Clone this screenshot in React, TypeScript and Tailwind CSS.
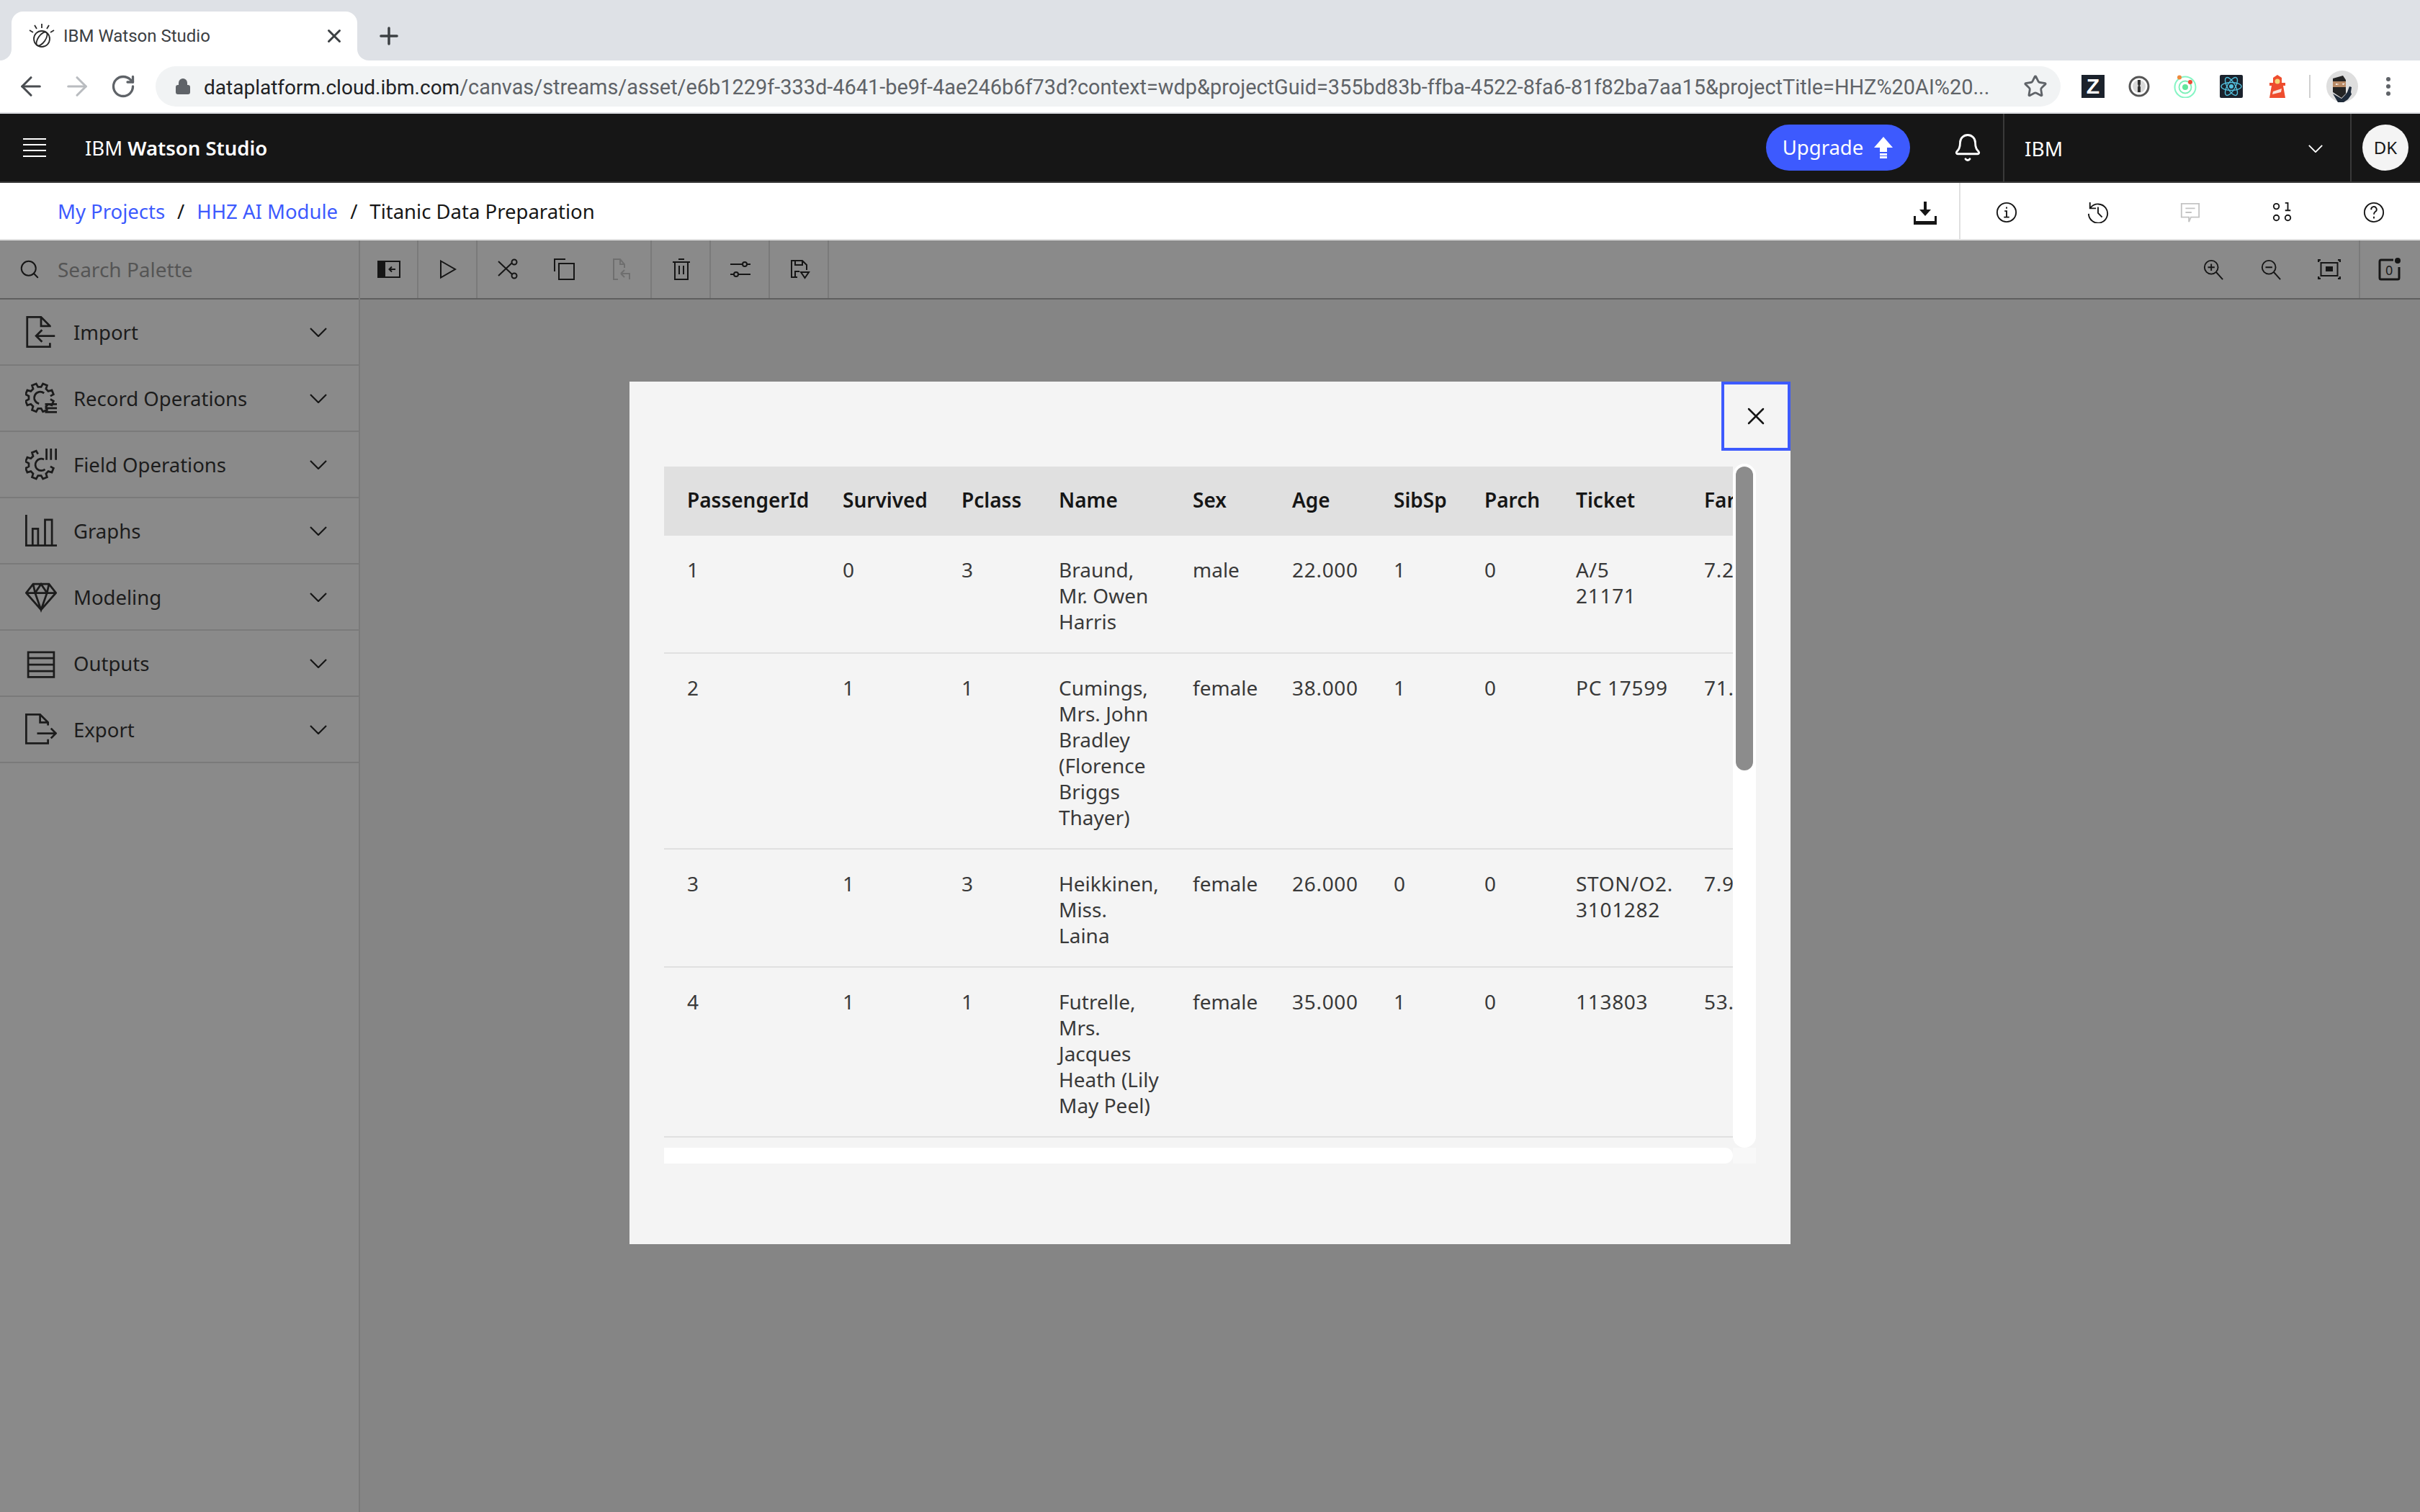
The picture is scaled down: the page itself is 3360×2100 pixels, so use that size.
import React from 'react';
import { Search, Star, Lock, ArrowLeft, ArrowRight, RotateCw, Plus, X, Bell } from 'lucide-react';

const plex = "font-['Noto_Sans',sans-serif]";

const rows = [
  ['1', '0', '3', 'Braund,\nMr. Owen\nHarris', 'male', '22.000', '1', '0', 'A/5\n21171', '7.25'],
  ['2', '1', '1', 'Cumings,\nMrs. John\nBradley\n(Florence\nBriggs\nThayer)', 'female', '38.000', '1', '0', 'PC 17599', '71.28'],
  ['3', '1', '3', 'Heikkinen,\nMiss.\nLaina', 'female', '26.000', '0', '0', 'STON/O2.\n3101282', '7.92'],
  ['4', '1', '1', 'Futrelle,\nMrs.\nJacques\nHeath (Lily\nMay Peel)', 'female', '35.000', '1', '0', '113803', '53.10'],
];
const headers = ['PassengerId', 'Survived', 'Pclass', 'Name', 'Sex', 'Age', 'SibSp', 'Parch', 'Ticket', 'Fare'];
const colWidths = [216, 165, 135, 186, 138, 141, 126, 127, 178, 178];

function Icon({ d, size = 44, className = '', sw = 2 }: { d: React.ReactNode; size?: number; className?: string; sw?: number }) {
  return (
    <svg width={size} height={size} viewBox="0 0 32 32" fill="none" stroke="currentColor" strokeWidth={sw} className={className}>
      {d}
    </svg>
  );
}

// outline of a gear, only the teeth between two angles
function gearPath(cx: number, cy: number, from: number, to: number) {
  const pt = (r: number, deg: number) => {
    const a = (deg * Math.PI) / 180;
    return `${(cx + r * Math.cos(a)).toFixed(1)} ${(cy + r * Math.sin(a)).toFixed(1)}`;
  };
  const out: string[] = [];
  for (let a = from; a <= to; a += 45) {
    out.push(pt(11, a - 14), pt(14.5, a - 9), pt(14.5, a + 9), pt(11, a + 14));
  }
  return 'M' + out.join('L');
}

const palette: { label: string; icon: React.ReactNode }[] = [
  {
    label: 'Import',
    icon: <Icon d={<path d="M25 27v4H2V1h14l9 9v1M16 1v9h9M30 20H11M17 14l-6 6 6 6" />} />,
  },
  {
    label: 'Record Operations',
    icon: (
      <Icon
        d={
          <>
            <path d={gearPath(14.5, 15.5, 22.5, 337.5)} />
            <path d="M19 11a6 6 0 1 0-5 10.5M20 22h12M20 26h12M20 30h12" />
          </>
        }
      />
    ),
  },
  {
    label: 'Field Operations',
    icon: (
      <Icon
        d={
          <>
            <path d={gearPath(14.5, 16.5, 22.5, 247.5)} />
            <path d="M20 21a6 6 0 1 1-1-10M21.5 0v11.5M26 0v11.5M31 0v11.5" />
          </>
        }
      />
    ),
  },
  { label: 'Graphs', icon: <Icon d={<path d="M1 0v31h31M7.5 31V14H13v17M20 31V5h7v26" />} /> },
  {
    label: 'Modeling',
    icon: <Icon d={<path d="M8 3h16l7 9-15 17L1 12zM1 12h30M10 12l6 17 6-17-6-9zM8 3l2 9M24 3l-2 9" />} />,
  },
  {
    label: 'Outputs',
    icon: <Icon d={<path d="M3 5h26v25H3zM3 11h26M3 17.5h26M3 24h26" />} />,
  },
  {
    label: 'Export',
    icon: <Icon d={<path d="M23 26v4H1V1h14l8 8v3M15 1v8h8M12 20h19M26 15l5 5-5 5" />} />,
  },
];

const toolbar: { w: number; items: React.ReactNode[] }[] = [
  {
    w: 81,
    items: [
      <svg key="a" width="32" height="24" viewBox="0 0 32 24" fill="none">
        <rect x="1" y="1" width="30" height="22" stroke="#161616" strokeWidth="2" />
        <rect x="0" y="0" width="11" height="24" fill="#161616" />
        <path d="M25 12h-8M20 8.5L16.5 12l3.5 3.5" stroke="#161616" strokeWidth="2" />
      </svg>,
    ],
  },
  { w: 82, items: [<Icon key="a" size={32} d={<path d="M6 4.5L26 16 6 27.5z" />} />] },
  {
    w: 242,
    items: [
      <Icon
        key="a"
        size={32}
        d={
          <>
            <path d="M3 5l19 18M3 25L22 7" />
            <circle cx="25" cy="6" r="3.5" />
            <circle cx="25" cy="25" r="3.5" />
          </>
        }
      />,
      <Icon key="b" size={32} d={<path d="M2 19V2h15M8 8h21v22H8z" />} />,
      <Icon key="c" size={32} className="text-[#6f6f6f]" d={<path d="M11 30H5V2h9l6 7v5M14 2v7h6M15 22l5-5M15 22l5 5M15 22h12v8" />} />,
    ],
  },
  { w: 82, items: [<Icon key="a" size={32} d={<path d="M4 6h24M12 2h8M7 6v24h18V6M13 11v12M19 11v12" />} />] },
  {
    w: 82,
    items: [
      <Icon
        key="a"
        size={32}
        d={
          <>
            <path d="M2 9h17M25 9h5M2 23h5M13 23h17" />
            <circle cx="22" cy="9" r="3" />
            <circle cx="10" cy="23" r="3" />
          </>
        }
      />,
    ],
  },
  { w: 82, items: [<Icon key="a" size={32} d={<path d="M13 27H5V4h15l6 6v7M10 4v6h10V4M10 27v-8h6M18 20h11l-5.5 8z" />} />] },
];

function Chevron({ className = '', w = 24, h = 13 }: { className?: string; w?: number; h?: number }) {
  return (
    <svg width={w} height={h} viewBox="0 0 24 13" fill="none" stroke="currentColor" strokeWidth="2.2" preserveAspectRatio="none" className={className}>
      <path d="M1 1l11 11L23 1" />
    </svg>
  );
}

function ExtensionIcons() {
  const cell = 'flex h-[44px] w-[64px] items-center justify-center';
  return (
    <div className="flex items-center">
      <div className={cell}>
        <div className="flex h-[32px] w-[32px] items-center justify-center bg-[#1b222c] font-['Liberation_Sans',sans-serif] text-[30px] font-bold leading-none text-white">Z</div>
      </div>
      <div className={cell}>
        <svg width="30" height="30" viewBox="0 0 30 30" fill="none">
          <circle cx="15" cy="15" r="13" fill="#fff" stroke="#555" strokeWidth="3" />
          <circle cx="15" cy="15" r="9" fill="#d9d9d9" />
          <path d="M13 6h4v6l-1 2 1 2v7h-4v-7l1-2-1-2z" fill="#333" />
        </svg>
      </div>
      <div className={cell}>
        <svg width="32" height="32" viewBox="0 0 32 32" fill="none">
          <circle cx="16" cy="17" r="14.5" stroke="#86f5c4" strokeWidth="2" />
          <circle cx="16" cy="17" r="8.5" stroke="#7cefb8" strokeWidth="1.8" />
          <circle cx="16" cy="17" r="4" fill="#62e69c" />
          <circle cx="8" cy="3.5" r="3" fill="#ef8a3c" />
          <circle cx="23" cy="10" r="3" fill="#ec4b35" />
        </svg>
      </div>
      <div className={cell}>
        <svg width="32" height="32" viewBox="0 0 32 32" fill="none">
          <rect width="32" height="32" rx="2" fill="#1b222c" />
          <circle cx="16" cy="16" r="3" fill="#53c1de" />
          <g stroke="#53c1de" strokeWidth="1.4">
            <ellipse cx="16" cy="16" rx="14" ry="5.5" />
            <ellipse cx="16" cy="16" rx="14" ry="5.5" transform="rotate(60 16 16)" />
            <ellipse cx="16" cy="16" rx="14" ry="5.5" transform="rotate(120 16 16)" />
          </g>
        </svg>
      </div>
      <div className={cell}>
        <svg width="22" height="32" viewBox="0 0 22 32">
          <path d="M11 0l6 4v7h5v4h-3l3 17H0l3-17H0v-4h5V4z" fill="#ee4d2e" />
          <circle cx="11" cy="9" r="3.5" fill="#f7d774" />
          <path d="M5 23l12-4-1 5-12 3z" fill="#fbe3da" />
        </svg>
      </div>
      <div className="ml-[12px] h-[32px] w-[2px] bg-[#d0d0d0]" />
      <div className="ml-[22px] flex h-[44px] w-[44px]">
        <svg width="44" height="44" viewBox="0 0 44 44">
          <circle cx="22" cy="22" r="22" fill="#dedede" />
          <path d="M9 11l14-4 4 6v19l-6 6-12-8z" fill="#242424" />
          <rect x="9" y="15" width="18" height="8" fill="#b88a66" />
          <path d="M13 18l5 1-5 1zM22 18l4 0-3 2z" fill="#fff" />
          <path d="M9 32l12 7 5-5 3-4 3-8 3 1-1 7 1 3-5 7-6 4h-8z" fill="#1f2b3a" />
        </svg>
      </div>
      <div className="ml-[39px] flex flex-col gap-[4px]">
        <div className="h-[6px] w-[6px] rounded-full bg-[#5f6368]" />
        <div className="h-[6px] w-[6px] rounded-full bg-[#5f6368]" />
        <div className="h-[6px] w-[6px] rounded-full bg-[#5f6368]" />
      </div>
    </div>
  );
}

export default function App() {
  return (
    <div className="relative flex h-[2100px] w-[3360px] flex-col overflow-hidden bg-[#858585]">
      {/* browser tabs */}
      <div className="flex h-[84px] shrink-0 items-end bg-[#dee1e6] pl-[16px] font-['Roboto',sans-serif]">
        <div className="relative flex h-[68px] w-[480px] items-center rounded-t-[16px] bg-white pl-[24px] pr-[17px]">
          <div className="absolute -left-[16px] bottom-0 h-[16px] w-[16px] bg-white">
            <div className="h-full w-full rounded-br-[16px] bg-[#dee1e6]" />
          </div>
          <div className="absolute -right-[16px] bottom-0 h-[16px] w-[16px] bg-white">
            <div className="h-full w-full rounded-bl-[16px] bg-[#dee1e6]" />
          </div>
          <svg width="36" height="36" viewBox="0 0 36 36" fill="none" stroke="#2b2b2b" strokeWidth="1.8">
            <circle cx="18" cy="22" r="11" />
            <ellipse cx="18" cy="22" rx="5" ry="11" transform="rotate(35 18 22)" />
            <path d="M18 1v6M8 3l3 5M28 3l-3 5M1 10l5 3M35 10l-5 3" />
          </svg>
          <span className="ml-[12px] flex-1 text-[24px] text-[#3c4043]">IBM Watson Studio</span>
          <X size={30} strokeWidth={2.4} className="text-[#3c4043]" />
        </div>
        <div className="flex h-[68px] w-[88px] items-center justify-center">
          <Plus size={38} strokeWidth={2.2} className="text-[#3c4043]" />
        </div>
      </div>

      {/* address bar */}
      <div className="flex h-[74px] shrink-0 items-center border-b-2 border-[#dadce0] bg-white font-['Roboto',sans-serif]">
        <div className="flex w-[216px] items-center gap-[22px] pl-[22px] text-[#5f6368]">
          <ArrowLeft size={42} strokeWidth={1.8} className="text-[#4a4d51]" />
          <ArrowRight size={42} strokeWidth={1.8} className="text-[#b9bcc0]" />
          <RotateCw size={36} strokeWidth={2.2} className="ml-[3px]" />
        </div>
        <div className="flex h-[56px] w-[2645px] items-center rounded-full bg-[#f1f3f4] pl-[26px] pr-[18px]">
          <Lock size={24} fill="#5f6368" className="text-[#5f6368]" />
          <span className="ml-[17px] flex-1 truncate pt-[3px] text-[28.9px] leading-[40px] text-[#5f6368]">
            <span className="text-[28px] text-[#202124]">dataplatform.cloud.ibm.com</span>
            /canvas/streams/asset/e6b1229f-333d-4641-be9f-4ae246b6f73d?context=wdp&projectGuid=355bd83b-ffba-4522-8fa6-81f82ba7aa15&projectTitle=HHZ%20AI%20...
          </span>
          <Star size={34} strokeWidth={2} className="ml-[24px] text-[#5f6368]" />
        </div>
        <div className="ml-[13px] flex items-center">
          <ExtensionIcons />
        </div>
      </div>

      {/* black header */}
      <div className={`flex h-[96px] shrink-0 items-center border-b-2 border-[#393939] bg-[#161616] text-white ${plex}`}>
        <div className="flex w-[118px] flex-col gap-[6px] pl-[32px]">
          <div className="h-[2px] w-[32px] bg-white" />
          <div className="h-[2px] w-[32px] bg-white" />
          <div className="h-[2px] w-[32px] bg-white" />
          <div className="h-[2px] w-[32px] bg-white" />
        </div>
        <span className="pt-[1px] text-[27.5px]">
          IBM <span className="font-semibold">Watson Studio</span>
        </span>
        <div className="ml-auto flex items-center">
          <div className="flex h-[64px] w-[200px] items-center justify-center gap-[14px] rounded-full bg-[#3d5afe] text-[27.5px]">
            Upgrade
            <svg width="28" height="30" viewBox="0 0 28 30" fill="white">
              <path d="M14 0l13 15h-8v6H9v-6H1zM9 23h10v3H9zM9 27h10v3H9z" />
            </svg>
          </div>
          <Bell size={42} strokeWidth={1.6} className="ml-[59px] mr-[28px]" />
          <div className="flex h-[94px] w-[484px] items-center justify-between border-x-2 border-[#393939] pl-[28px] pr-[38px]">
            <span className="pt-[2px] text-[28px]">IBM</span>
            <Chevron w={20} h={11} className="mt-[2px] text-white" />
          </div>
          <div className="flex w-[95px] pl-[15px]">
            <div className="flex h-[64px] w-[64px] items-center justify-center rounded-full bg-[#f4f4f4] text-[24px] text-[#161616]">DK</div>
          </div>
        </div>
      </div>

      {/* breadcrumb */}
      <div className={`flex h-[80px] shrink-0 items-center border-b-2 border-[#e0e0e0] bg-white text-[27.5px] ${plex}`}>
        <div className="flex items-center pl-[80px] pt-[2px]">
          <span className="text-[#3d5afe]">My Projects</span>
          <span className="mx-[17px] text-[#161616]">/</span>
          <span className="text-[#3d5afe]">HHZ AI Module</span>
          <span className="mx-[17px] text-[#161616]">/</span>
          <span className="text-[#161616]">Titanic Data Preparation</span>
        </div>
        <div className="ml-auto flex h-full items-center text-[#161616]">
          <svg width="32" height="32" viewBox="0 0 32 32" fill="#161616" className="mr-[31px] mt-[6px]">
            <path d="M14 0h4v11h6l-8 9-8-9h6zM0 20h3v7h26v-7h3v12H0z" />
          </svg>
          <div className="flex h-full w-[640px] items-center border-l-2 border-[#e0e0e0] pt-[3px]">
            <div className="flex w-[128px] justify-center">
              <Icon size={30} d={<><circle cx="16" cy="16" r="14" /><path d="M13 14h3v9M12 23h8M16 8v2.5" /></>} />
            </div>
            <div className="flex w-[128px] justify-center">
              <Icon size={30} d={<path d="M4 1v9h9M5 9a14 14 0 1 1-3 9M16 8v9l6 6" />} />
            </div>
            <div className="flex w-[128px] justify-center">
              <Icon size={30} className="text-[#c4c4c4]" d={<path d="M3 3h26v20H17l-3 7v-7H3zM9 10h14M9 16h9" />} />
            </div>
            <div className="flex w-[128px] justify-center">
              <Icon size={30} d={<><circle cx="7" cy="7" r="4" /><path d="M20 2h4v11M20 13h8" /><circle cx="7" cy="24" r="4" /><circle cx="24" cy="24" r="4" /></>} />
            </div>
            <div className="flex w-[128px] justify-center">
              <Icon size={30} d={<><circle cx="16" cy="16" r="14" /><path d="M12 12a4 4 0 1 1 6 3c-1.5 1-2 2-2 4M16 22v3" /></>} />
            </div>
          </div>
        </div>
      </div>

      {/* canvas */}
      <div className={`flex flex-1 bg-[#858585] ${plex}`}>
        <div className="w-[500px] shrink-0 border-r-2 border-[#7a7a7a] bg-[#8a8a8a]">
          <div className="flex h-[82px] items-center border-b-2 border-[#5f5f5f] pl-[26px] text-[28px] text-[#555]">
            <Search size={30} strokeWidth={1.6} className="text-[#161616]" />
            <span className="ml-[24px]">Search Palette</span>
          </div>
          {palette.map((p) => (
            <div key={p.label} className="flex h-[92px] items-center border-b-2 border-[#7a7a7a] text-[27.5px] text-[#1c1c1c]">
              <div className="flex w-[102px] pl-[35px]">{p.icon}</div>
              <span className="pt-[2px]">{p.label}</span>
              <Chevron className="ml-auto mr-[44px] text-[#161616]" />
            </div>
          ))}
        </div>
        <div className="flex-1">
          <div className="flex h-[82px] items-center border-b-2 border-[#5f5f5f] bg-[#8a8a8a] text-[#161616]">
            {toolbar.map((g, i) => (
              <div key={i} className={`flex h-full items-center border-r-2 border-[#7a7a7a] ${i === 0 ? '' : 'pl-[2px]'}`} style={{ width: g.w }}>
                {g.items.map((it, j) => (
                  <div key={j} className="flex flex-1 justify-center">{it}</div>
                ))}
              </div>
            ))}
            <div className="ml-auto flex h-full items-center">
              <div className="flex items-center pr-[25px]">
                <Icon size={30} d={<><circle cx="13" cy="13" r="10" /><path d="M20 20l10 11M13 8v10M8 13h10" /></>} />
                <Icon size={30} className="ml-[50px]" d={<><circle cx="13" cy="13" r="10" /><path d="M20 20l10 11M8 13h10" /></>} />
                <svg width="32" height="28" viewBox="0 0 32 28" fill="none" stroke="#161616" strokeWidth="2" className="ml-[50px]">
                  <path d="M1 4V1h3M28 1h3v3M31 24v3h-3M4 27H1v-3" strokeWidth="2.5" />
                  <path d="M4.5 5h23v18h-23z" />
                  <rect x="11" y="10" width="10" height="7" fill="#161616" stroke="none" />
                </svg>
              </div>
              <div className="flex h-full w-[85px] items-center justify-center border-l-2 border-[#7a7a7a]">
                <svg width="32" height="32" viewBox="0 0 32 32" fill="none" stroke="#161616" strokeWidth="3" className="-ml-[2px]">
                  <path d="M21 3H4a2 2 0 0 0-2 2v23a2 2 0 0 0 2 2h23a2 2 0 0 0 2-2V13" />
                  <text x="10" y="24" fontSize="18" fill="#1c1c1c" stroke="none">0</text>
                  <circle cx="27" cy="4" r="4" fill="#161616" stroke="none" />
                </svg>
              </div>
            </div>
          </div>
        </div>
      </div>

      {/* modal */}
      <div className={`absolute left-[874px] top-[530px] h-[1198px] w-[1612px] bg-[#f4f4f4] ${plex}`}>
        <div className="absolute right-0 top-0 flex h-[96px] w-[96px] items-center justify-center border-4 border-[#3d5afe]">
          <X size={40} strokeWidth={1.5} className="text-[#161616]" />
        </div>
        <div className="absolute left-[48px] top-[118px] h-[946px] w-[1484px] overflow-hidden">
          <table className="w-[1590px] table-fixed border-collapse text-left text-[28px] leading-[36px]">
            <colgroup>
              {colWidths.map((w, i) => (
                <col key={i} style={{ width: w }} />
              ))}
            </colgroup>
            <thead>
              <tr className="h-[96px] bg-[#e0e0e0] font-semibold text-[#161616]">
                {headers.map((h) => (
                  <th key={h} className="pb-[4px] pl-[32px] font-semibold">{h}</th>
                ))}
              </tr>
            </thead>
            <tbody className="text-[#393939]">
              {rows.map((r) => (
                <tr key={r[0]} className="border-b-2 border-[#e0e0e0] align-top">
                  {r.map((c, i) => (
                    <td key={i} className={`whitespace-pre-line pb-[25px] pl-[32px] pt-[29px] ${/\d/.test(c) ? 'tracking-[0.7px]' : ''}`}>{c}</td>
                  ))}
                </tr>
              ))}
            </tbody>
          </table>
        </div>
        {/* scrollbars */}
        <div className="absolute left-[1532px] top-[114px] h-[950px] w-[32px] rounded-full bg-white">
          <div className="mx-[4px] mt-[4px] h-[422px] w-[24px] rounded-full bg-[#8c8c8c]" />
        </div>
        <div className="absolute left-[48px] top-[1064px] h-[22px] w-[1484px] rounded-r-full bg-white" />
        <div className="absolute left-[1532px] top-[1064px] h-[22px] w-[32px] bg-[#f8f8f8]" />
      </div>
    </div>
  );
}
